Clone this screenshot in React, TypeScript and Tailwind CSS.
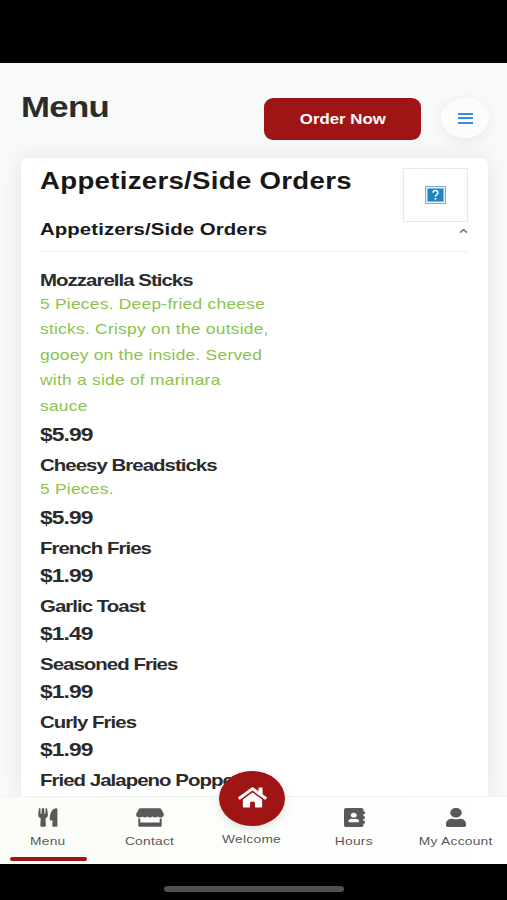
import React from 'react';
import { FaUser, FaHome, FaAddressBook } from 'react-icons/fa';

interface MenuItem {
  name: string;
  price?: string;
  description?: string[];
}

const items: MenuItem[] = [
  {
    name: 'Mozzarella Sticks',
    price: '$5.99',
    description: [
      '5 Pieces. Deep-fried cheese',
      'sticks. Crispy on the outside,',
      'gooey on the inside. Served',
      'with a side of marinara',
      'sauce',
    ],
  },
  { name: 'Cheesy Breadsticks', price: '$5.99', description: ['5 Pieces.'] },
  { name: 'French Fries', price: '$1.99' },
  { name: 'Garlic Toast', price: '$1.49' },
  { name: 'Seasoned Fries', price: '$1.99' },
  { name: 'Curly Fries', price: '$1.99' },
  { name: 'Fried Jalapeno Poppers' },
];

const UtensilsIcon: React.FC = () => (
  <svg width="20" height="19" viewBox="0 0 20 19" fill="currentColor">
    <path d="M0.9 0.3H2.3L2.7 6H3.4L3.8 0.3H6.2L6.6 6H7.3L7.7 0.3H9.1L9.9 6.4C10 8.6 8.9 9.7 7.5 10.3L7.9 17.6Q7.9 18.8 6.7 18.8H3.5Q2.3 18.8 2.3 17.6L2.7 10.3C1.2 9.7 0.1 8.6 0.2 6.4Z" />
    <path d="M19.4 1.2V17.7Q19.4 18.8 18.3 18.8H15.4Q14.2 18.8 14.3 17.6L14.6 12.4H12.6Q11.6 12.4 11.7 11.2C11.7 5.8 13.9 0.3 18.2 0.3Q19.4 0.3 19.4 1.2Z" />
  </svg>
);

const ShopIcon: React.FC = () => (
  <svg width="28" height="19" viewBox="0 0 28 19" fill="currentColor">
    <path d="M4.3 0.3H23.7Q24.6 0.3 25.1 1.1L27.6 5.6C28.4 7.4 27.4 9.3 25.2 9.4C23.8 9.5 22.8 9 22 8.4C20.4 9.7 18 9.7 16.6 8.4C15.1 9.7 12.8 9.7 11.4 8.4C9.9 9.7 7.6 9.7 6 8.4C5.2 9 4.2 9.5 2.8 9.4C0.6 9.3 -0.4 7.4 0.4 5.6L2.9 1.1Q3.4 0.3 4.3 0.3Z" />
    <path d="M2.3 10.6H4.3V14.6H23.7V10.6H25.7V17.5Q25.7 18.8 24.4 18.8H3.6Q2.3 18.8 2.3 17.5Z" />
  </svg>
);

const MenuRow: React.FC<{ item: MenuItem }> = ({ item }) => (
  <li className="mb-1 origin-left scale-x-120 whitespace-nowrap">
    <h4 className="text-[17px] leading-[26px] font-bold tracking-[-0.8px]">{item.name}</h4>
    {item.description && (
      <div className="-mt-[2px] mb-[2px] text-[14.5px] leading-[25.4px] tracking-[0.2px] text-[#8bc34a]">
        {item.description.map((line) => (
          <p key={line}>{line}</p>
        ))}
      </div>
    )}
    {item.price && (
      <p className="text-[19px] leading-[28px] font-bold tracking-[-0.75px]">{item.price}</p>
    )}
  </li>
);

interface TabProps {
  label: string;
  icon: React.ReactNode;
  active?: boolean;
}

const Tab: React.FC<TabProps> = ({ label, icon, active = false }) => (
  <button className="relative flex h-full w-[102px] shrink-0 flex-col items-center pt-[11px] text-[#595959]">
    <span className="flex h-[19px] items-center">{icon}</span>
    <span className="mt-[6px] scale-x-120 text-[11.5px] leading-4 tracking-[0.2px] whitespace-nowrap">
      {label}
    </span>
    {active && <span className="absolute bottom-[3px] h-1 w-[77px] rounded-full bg-[#a31212]" />}
  </button>
);

export default function App() {
  return (
    <div className="flex h-[900px] w-[507px] flex-col overflow-hidden bg-black pt-[63px] font-['Liberation_Sans',Arial,sans-serif] text-[#2b2b2b]">
      <main className="flex min-h-0 flex-1 flex-col overflow-hidden bg-[#f8faf9]">
        {/* Header */}
        <header className="flex h-[95px] shrink-0 items-start pl-[21px]">
          <h1 className="mt-[27px] w-[243px] text-[29px] leading-[34px] font-bold tracking-[-0.6px]">
            <span className="inline-block origin-left scale-x-120">Menu</span>
          </h1>
          <button className="mt-[35px] flex h-[42px] w-[157px] items-center justify-center rounded-[9px] bg-[#9f1414] text-[14px] font-bold text-white">
            <span className="scale-x-120 whitespace-nowrap">Order Now</span>
          </button>
          <button className="mt-[35px] ml-5 flex h-10 w-[48px] items-center justify-center rounded-[24px/20px] bg-[#fbfdfc] shadow-[0_3px_14px_rgba(0,0,0,0.07)]">
            <span className="flex w-[15px] flex-col gap-[2.5px]">
              <span className="h-[2px] bg-[#3c8ae0]" />
              <span className="h-[2px] bg-[#3c8ae0]" />
              <span className="h-[2px] bg-[#3c8ae0]" />
            </span>
          </button>
        </header>

        {/* Menu card */}
        <section className="mr-[19px] ml-[20.5px] flex-1 rounded-t-[7px] bg-white pr-5 pl-[19.5px] shadow-[0_0_22px_rgba(0,0,0,0.09)]">
          <div className="flex h-[63px] justify-between pt-[10px]">
            <h2 className="origin-left scale-x-120 text-[23px] leading-[26px] font-bold tracking-[0.25px] whitespace-nowrap text-[#181818]">
              Appetizers/Side Orders
            </h2>
            <div className="flex h-[54px] w-[65px] shrink-0 items-center justify-center border-[1.5px] border-[#e9e9eb]">
              <svg width="21" height="18" viewBox="0 0 21 18">
                <rect x="0.5" y="0.5" width="20" height="17" fill="#e4effa" stroke="#86a9d6" />
                <rect x="2.5" y="2.5" width="16" height="13" fill="#2087bd" />
                <path d="M8 6.8C8 3.9 13 3.9 13 6.7C13 8.5 10.5 8.4 10.5 10.8" fill="none" stroke="white" strokeWidth="1.5" />
                <rect x="9.7" y="12" width="1.7" height="1.6" fill="white" />
              </svg>
            </div>
          </div>
          <div className="flex h-[31px] items-start justify-between border-b border-[#f0f0f0]">
            <h3 className="origin-left scale-x-120 text-[17px] leading-[18px] font-bold tracking-[0.06px] whitespace-nowrap text-[#181818]">
              Appetizers/Side Orders
            </h3>
            <svg className="mt-[7px]" width="9" height="6" viewBox="0 0 9 6">
              <path d="M1 4.7L4.5 1.6L8 4.7" fill="none" stroke="#808080" strokeWidth="1.8" />
            </svg>
          </div>
          <ul className="w-[200px] pt-4">
            {items.map((item) => (
              <MenuRow key={item.name} item={item} />
            ))}
          </ul>
        </section>
      </main>

      {/* Tab bar */}
      <nav className="relative -ml-[3px] flex h-[68px] w-[510px] shrink-0 border-t border-[#f1f3ee] bg-linear-to-r from-[#fafdf6] to-white">
        <Tab active label="Menu" icon={<UtensilsIcon />} />
        <Tab label="Contact" icon={<ShopIcon />} />
        <button className="relative flex w-[102px] flex-col items-center pt-[34px] text-[#595959]">
          <span className="absolute -top-[26px] flex h-[55px] w-[66px] items-center justify-center rounded-[50%] bg-[#9f1414] text-white shadow-[0_3px_10px_rgba(0,0,0,0.12)]">
            <FaHome preserveAspectRatio="none" className="-mt-[2px] h-[23px] w-[29px]" />
          </span>
          <span className="scale-x-120 text-[11.5px] leading-4 tracking-[0.2px]">Welcome</span>
        </button>
        <Tab
          label="Hours"
          icon={<FaAddressBook preserveAspectRatio="none" className="h-[19px] w-[21px]" />}
        />
        <Tab
          label="My Account"
          icon={<FaUser preserveAspectRatio="none" className="h-[19px] w-[20px]" />}
        />
      </nav>

      {/* Home indicator */}
      <footer className="flex h-9 shrink-0 justify-center pt-[22px]">
        <div className="h-[6px] w-[180px] rounded-full bg-[#505050]" />
      </footer>
    </div>
  );
}
